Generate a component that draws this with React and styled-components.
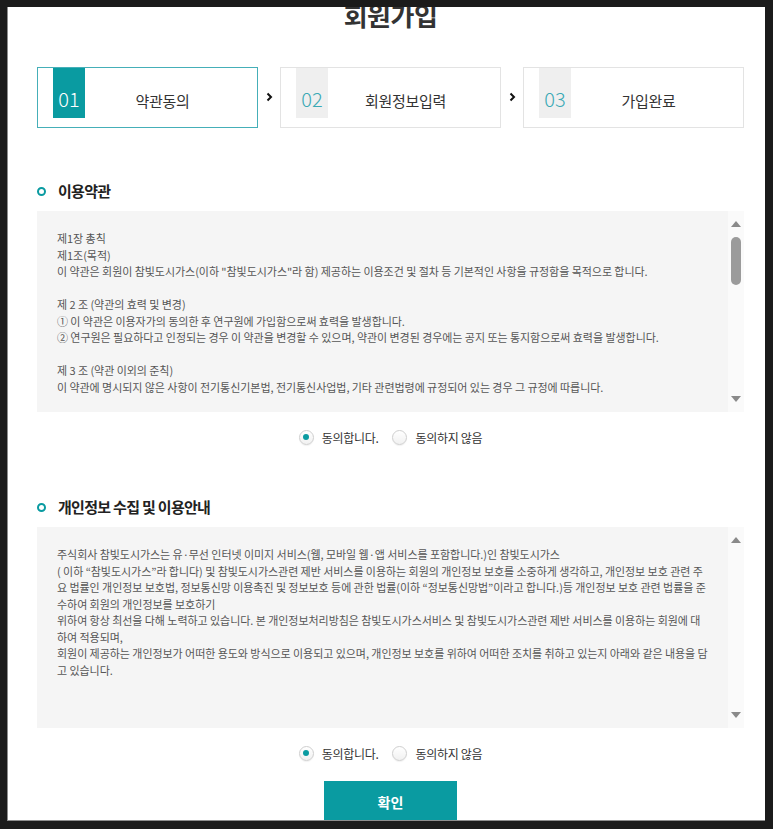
import React from 'react';
import styled, { createGlobalStyle } from 'styled-components';

const TEAL = '#0a9ba1';

const steps = [
  { no: '01', label: '약관동의', active: true },
  { no: '02', label: '회원정보입력' },
  { no: '03', label: '가입완료' },
];

const termsLines = [
  '제1장 총칙',
  '제1조(목적)',
  '이 약관은 회원이 참빛도시가스(이하 "참빛도시가스"라 함) 제공하는 이용조건 및 절차 등 기본적인 사항을 규정함을 목적으로 합니다.',
  '',
  '제 2 조 (약관의 효력 및 변경)',
  '① 이 약관은 이용자가의 동의한 후 연구원에 가입함으로써 효력을 발생합니다.',
  '② 연구원은 필요하다고 인정되는 경우 이 약관을 변경할 수 있으며, 약관이 변경된 경우에는 공지 또는 통지함으로써 효력을 발생합니다.',
  '',
  '제 3 조 (약관 이외의 준칙)',
  '이 약관에 명시되지 않은 사항이 전기통신기본법, 전기통신사업법, 기타 관련법령에 규정되어 있는 경우 그 규정에 따릅니다.',
  '',
  '제 4 조 (용어의 정의)',
];

const privacyLines = [
  '주식회사 참빛도시가스는 유·무선 인터넷 이미지 서비스(웹, 모바일 웹·앱 서비스를 포함합니다.)인 참빛도시가스',
  '( 이하 “참빛도시가스”라 합니다) 및 참빛도시가스관련 제반 서비스를 이용하는 회원의 개인정보 보호를 소중하게 생각하고, 개인정보 보호 관련 주',
  '요 법률인 개인정보 보호법, 정보통신망 이용촉진 및 정보보호 등에 관한 법률(이하 “정보통신망법”이라고 합니다.)등 개인정보 보호 관련 법률을 준',
  '수하여 회원의 개인정보를 보호하기',
  '위하여 항상 최선을 다해 노력하고 있습니다. 본 개인정보처리방침은 참빛도시가스서비스 및 참빛도시가스관련 제반 서비스를 이용하는 회원에 대',
  '하여 적용되며,',
  '회원이 제공하는 개인정보가 어떠한 용도와 방식으로 이용되고 있으며, 개인정보 보호를 위하여 어떠한 조치를 취하고 있는지 아래와 같은 내용을 담',
  '고 있습니다.',
];

const Arrow = ({ down }) => (
  <svg width="10" height="6" viewBox="0 0 10 6">
    <path d={down ? 'M0 0 H10 L5 6 Z' : 'M0 6 H10 L5 0 Z'} fill="#8a8a8a" />
  </svg>
);

const Chevron = () => (
  <svg width="7" height="10" viewBox="0 0 7 10">
    <polyline points="1.5,1.5 5,5 1.5,8.5" fill="none" stroke="#111" strokeWidth="2" />
  </svg>
);

const TermsBox = ({ lines, thumb }) => (
  <BoxWrap>
    <BoxText>
      {lines.map((line, i) => (
        <TextLine key={i}>{line}</TextLine>
      ))}
    </BoxText>
    <ScrollBar>
      <ScrollButton>
        <Arrow />
      </ScrollButton>
      <ScrollTrack>{thumb && <Thumb />}</ScrollTrack>
      <ScrollButton>
        <Arrow down />
      </ScrollButton>
    </ScrollBar>
  </BoxWrap>
);

const AgreeGroup = () => (
  <AgreeRow>
    <RadioLabel>
      <RadioDot $checked />
      동의합니다.
    </RadioLabel>
    <RadioLabel>
      <RadioDot />
      동의하지 않음
    </RadioLabel>
  </AgreeRow>
);

const App = () => {
  return (
    <>
      <GlobalStyle />
      <Frame>
        <Panel>
          <Content>
            <Title>회원가입</Title>

            <StepList>
              {steps.map((step, i) => (
                <React.Fragment key={step.no}>
                  {i > 0 && (
                    <StepArrow>
                      <Chevron />
                    </StepArrow>
                  )}
                  <StepBox $active={step.active}>
                    <StepNo $active={step.active}>{step.no}</StepNo>
                    <StepLabel>{step.label}</StepLabel>
                  </StepBox>
                </React.Fragment>
              ))}
            </StepList>

            <SectionTitle>
              <Ring />
              이용약관
            </SectionTitle>
            <TermsBox lines={termsLines} thumb />
            <AgreeGroup />

            <SectionTitle $second>
              <Ring />
              개인정보 수집 및 이용안내
            </SectionTitle>
            <TermsBox lines={privacyLines} />
            <AgreeGroup />

            <SubmitButton>확인</SubmitButton>
          </Content>
        </Panel>
      </Frame>
    </>
  );
};

// Styled Components
const GlobalStyle = createGlobalStyle`
  body {
    margin: 0;
    background: #1b1b1b;
    font-family: "Noto Sans CJK KR", "Noto Sans", sans-serif;
  }
`;

const Frame = styled.div`
  padding: 7px 8px 8px 7px;
`;

const Panel = styled.div`
  width: 758px;
  height: 814px;
  box-sizing: border-box;
  background: #fff;
  border-left: 1px solid #8d8d8d;
  border-bottom: 1px solid #8d8d8d;
  overflow: hidden;
`;

const Content = styled.div`
  padding: 0 21px 0 29px;
  display: flex;
  flex-direction: column;
`;

const Title = styled.h1`
  margin: -7px 0 0;
  text-align: center;
  font-size: 26px;
  line-height: 30px;
  font-weight: 700;
  letter-spacing: -0.5px;
  color: #333;
`;

const StepList = styled.div`
  display: flex;
  align-items: center;
  margin-top: 37px;
`;

const StepBox = styled.div`
  flex: 1;
  height: 61px;
  box-sizing: border-box;
  display: flex;
  align-items: flex-start;
  padding: 0 17px 0 15px;
  border: 1px solid ${({ $active }) => ($active ? '#45afb8' : '#e3e3e3')};
`;

const StepNo = styled.div`
  width: 32px;
  height: 50px;
  box-sizing: border-box;
  padding-top: 19px;
  text-align: center;
  font-size: 20px;
  line-height: 24px;
  font-weight: 300;
  background: ${({ $active }) => ($active ? TEAL : '#efefef')};
  color: ${({ $active }) => ($active ? '#fff' : '#3aa9b5')};
`;

const StepLabel = styled.div`
  flex: 1;
  padding-top: 23px;
  text-align: center;
  font-size: 15px;
  line-height: 20px;
  letter-spacing: -0.3px;
  color: #333;
`;

const StepArrow = styled.div`
  width: 22px;
  display: flex;
  justify-content: center;
  padding-bottom: 2px;
`;

const SectionTitle = styled.h2`
  display: flex;
  align-items: center;
  gap: 12px;
  margin: ${({ $second }) => ($second ? '50px' : '53px')} 0 0;
  font-size: 15px;
  line-height: 20px;
  font-weight: 700;
  letter-spacing: -0.7px;
  color: #222;
`;

const Ring = styled.span`
  width: 9px;
  height: 9px;
  box-sizing: border-box;
  border: 2.5px solid ${TEAL};
  border-radius: 50%;
`;

const BoxWrap = styled.div`
  display: flex;
  height: 201px;
  margin-top: 10px;
  background: #f5f5f5;
`;

const BoxText = styled.div`
  flex: 1;
  padding: 19px 20px;
  overflow: hidden;
  font-size: 11px;
  line-height: 16.5px;
  letter-spacing: -0.05px;
  color: #555;
`;

const TextLine = styled.p`
  margin: 0;
  min-height: 16.5px;
  white-space: nowrap;
`;

const ScrollBar = styled.div`
  width: 16px;
  display: flex;
  flex-direction: column;
  align-items: center;
  background: #fafafa;
`;

const ScrollButton = styled.div`
  height: 26px;
  display: flex;
  align-items: center;
  justify-content: center;
`;

const ScrollTrack = styled.div`
  flex: 1;
  width: 100%;
  display: flex;
  justify-content: center;
`;

const Thumb = styled.div`
  width: 10px;
  height: 48px;
  border-radius: 5px;
  background: #9b9b9b;
`;

const AgreeRow = styled.div`
  display: flex;
  justify-content: center;
  gap: 14px;
  margin-top: 15px;
  height: 20px;
`;

const RadioLabel = styled.label`
  display: flex;
  align-items: center;
  gap: 8px;
  font-size: 12px;
  letter-spacing: -0.3px;
  color: #333;
`;

const RadioDot = styled.span`
  position: relative;
  width: 15px;
  height: 15px;
  box-sizing: border-box;
  border-radius: 50%;
  border: 1px solid #cfcfcf;
  background: linear-gradient(#fff, #f1f1f1);
  box-shadow: 0 1px 1px rgba(0, 0, 0, 0.06);

  &::after {
    content: '';
    display: ${({ $checked }) => ($checked ? 'block' : 'none')};
    position: absolute;
    top: 50%;
    left: 50%;
    width: 6px;
    height: 6px;
    margin: -3px 0 0 -3px;
    border-radius: 50%;
    background: ${TEAL};
  }
`;

const SubmitButton = styled.button`
  align-self: center;
  width: 133px;
  height: 42px;
  margin-top: 18px;
  border: none;
  background: ${TEAL};
  color: #fff;
  font-family: inherit;
  font-size: 14px;
  font-weight: 700;
  cursor: pointer;
`;

export default App;
